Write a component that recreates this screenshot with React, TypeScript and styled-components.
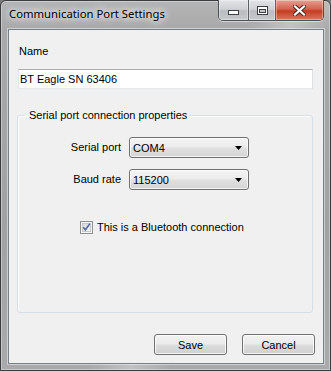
import React from 'react'
import styled, { createGlobalStyle } from 'styled-components'

const GlobalStyle = createGlobalStyle`
  html, body {
    margin: 0;
    padding: 0;
  }
  body {
    width: 331px;
    height: 371px;
    overflow: hidden;
    background: #7a7a7a;
  }
`

const Window = styled.div`
  width: 331px;
  height: 371px;
  box-sizing: border-box;
  display: flex;
  flex-direction: column;
  border: 1px solid #3a3d40;
  border-radius: 6px 6px 0 0;
  box-shadow: inset 0 0 0 1px rgba(255, 255, 255, 0.35);
  background:
    linear-gradient(115deg, rgba(255, 255, 255, 0) 52%, rgba(255, 255, 255, 0.28) 60%, rgba(255, 255, 255, 0) 68%),
    linear-gradient(180deg, #b4b4b4 0%, #a9a9a9 8%, #a2a2a2 60%, #aaaaaa 100%);
  font-family: "Liberation Sans", Arial, sans-serif;
  font-size: 11px;
  color: #000;
`

const TitleBar = styled.div`
  display: flex;
  align-items: flex-start;
  height: 28px;
  flex: 0 0 28px;
  padding-left: 8px;
`

const Title = styled.div`
  font-family: "Noto Sans", "Open Sans", sans-serif;
  font-size: 11.3px;
  line-height: 26px;
  color: #000;
  text-shadow: 0 0 6px #fff, 0 0 10px #fff, 0 0 14px rgba(255, 255, 255, 0.8);
  white-space: nowrap;
`

const CaptionGroup = styled.div`
  display: flex;
  margin: -1px 6px 0 auto;
  height: 20px;
  border: 1px solid #4b5056;
  border-top: none;
  border-radius: 0 0 5px 5px;
  overflow: hidden;
  box-shadow: 0 1px 0 rgba(255, 255, 255, 0.5);
`

const CaptionButton = styled.div<{ $w: number; $close?: boolean }>`
  width: ${p => p.$w}px;
  display: flex;
  align-items: center;
  justify-content: center;
  box-sizing: border-box;
  & + & {
    border-left: 1px solid #5b6066;
  }
  box-shadow: inset 0 0 0 1px rgba(255, 255, 255, 0.35);
  background: ${p =>
    p.$close
      ? 'linear-gradient(180deg, #e7a193 0%, #d2634f 45%, #c43b22 55%, #d9785d 100%)'
      : 'linear-gradient(180deg, #e3e4e6 0%, #cfd1d4 45%, #b9bcc0 55%, #c7c9cc 100%)'};
`

const Client = styled.div`
  flex: 1;
  display: flex;
  flex-direction: column;
  margin: 0 6px 6px 7px;
  padding: 15px 10px 8px 9px;
  border: 1px solid #76808a;
  box-shadow: 0 0 0 1px rgba(255, 255, 255, 0.45);
  background: #f0f0f0;
`

const Label = styled.div`
  line-height: 13px;
  height: 13px;
  padding-left: 1px;
`

const TextBox = styled.input`
  margin-top: 11px;
  height: 20px;
  box-sizing: border-box;
  padding: 0 1px;
  border: 1px solid;
  border-color: #abadb3 #dbdfe6 #e3e9ef #e2e3ea;
  background: #fff;
  font-family: "Liberation Sans", Arial, sans-serif;
  font-size: 11px;
  color: #000;
  outline: none;
`

const GroupBox = styled.fieldset`
  margin: 20px 0 0 -1px;
  padding: 15px 0 0 0;
  height: 204px;
  box-sizing: border-box;
  border: 1px solid #d5dfe5;
  border-radius: 3px;
  box-shadow: inset 1px 1px 0 #fff;
  min-width: 0;
`

const Legend = styled.legend`
  margin-left: 6px;
  padding: 0 2px 0 5px;
  line-height: 13px;
`

const FieldGrid = styled.div`
  display: grid;
  grid-template-columns: 103px 120px;
  column-gap: 8px;
  row-gap: 11px;
  align-items: center;
`

const FieldLabel = styled.div`
  text-align: right;
  line-height: 13px;
`

const Combo = styled.div`
  display: flex;
  align-items: center;
  justify-content: space-between;
  height: 21px;
  box-sizing: border-box;
  padding: 0 6px 0 3px;
  border: 1px solid #707070;
  border-radius: 3px;
  box-shadow: inset 0 0 0 1px rgba(255, 255, 255, 0.7);
  background: linear-gradient(180deg, #f4f4f4 0%, #ececec 48%, #e0e0e0 52%, #d4d4d4 100%);
`

const CheckRow = styled.label`
  display: flex;
  align-items: center;
  gap: 4px;
  margin: 31px 0 0 62px;
  line-height: 13px;
`

const ButtonRow = styled.div`
  display: flex;
  justify-content: flex-end;
  gap: 15px;
  margin: 21px -2px 0 0;
`

const Button = styled.button`
  width: 73px;
  height: 21px;
  padding: 0;
  border: 1px solid #707070;
  border-radius: 3px;
  box-shadow: inset 0 0 0 1px rgba(255, 255, 255, 0.8);
  background: linear-gradient(180deg, #f2f2f2 0%, #ebebeb 48%, #dddddd 52%, #cfcfcf 100%);
  font-family: "Liberation Sans", Arial, sans-serif;
  font-size: 11px;
  color: #000;
`

function Arrow() {
  return (
    <svg width="7" height="4" viewBox="0 0 7 4">
      <path d="M0 0 H7 L3.5 4 Z" fill="#000" />
    </svg>
  )
}

function CheckBox() {
  return (
    <svg width="13" height="13" viewBox="0 0 13 13">
      <defs>
        <linearGradient id="cbg" x1="0" y1="0" x2="1" y2="1">
          <stop offset="0" stopColor="#d6d8db" />
          <stop offset="1" stopColor="#f7f7f7" />
        </linearGradient>
      </defs>
      <rect x="0.5" y="0.5" width="12" height="12" fill="#f4f4f4" stroke="#8f8f8f" />
      <rect x="2.5" y="2.5" width="8" height="8" fill="url(#cbg)" stroke="#c6c8cb" />
      <path d="M3.2 6.3 L5.4 8.8 L9.8 2.8" fill="none" stroke="#5a6fa0" strokeWidth="1.7" />
    </svg>
  )
}

function MinGlyph() {
  return (
    <svg width="11" height="6" viewBox="0 0 11 6" style={{ marginTop: 6 }}>
      <rect x="0.5" y="0.5" width="10" height="4" fill="#fff" stroke="#3c4046" />
    </svg>
  )
}

function MaxGlyph() {
  return (
    <svg width="11" height="9" viewBox="0 0 11 9">
      <rect x="0.5" y="0.5" width="10" height="8" fill="#fff" stroke="#3c4046" />
      <rect x="2.5" y="3.5" width="6" height="3" fill="#c4c7cb" stroke="#3c4046" />
    </svg>
  )
}

function CloseGlyph() {
  return (
    <svg width="13" height="11" viewBox="0 0 13 11">
      <path d="M2 1.5 L11 9.5 M11 1.5 L2 9.5" stroke="#4a2a24" strokeWidth="4.2" strokeLinecap="square" />
      <path d="M2 1.5 L11 9.5 M11 1.5 L2 9.5" stroke="#fff" strokeWidth="2.2" strokeLinecap="square" />
    </svg>
  )
}

export default function App() {
  return (
    <>
      <GlobalStyle />
      <Window>
        <TitleBar>
          <Title>Communication Port Settings</Title>
          <CaptionGroup>
            <CaptionButton $w={29}><MinGlyph /></CaptionButton>
            <CaptionButton $w={27}><MaxGlyph /></CaptionButton>
            <CaptionButton $w={48} $close><CloseGlyph /></CaptionButton>
          </CaptionGroup>
        </TitleBar>
        <Client>
          <Label>Name</Label>
          <TextBox defaultValue="BT Eagle SN 63406" />
          <GroupBox>
            <Legend>Serial port connection properties</Legend>
            <FieldGrid>
              <FieldLabel>Serial port</FieldLabel>
              <Combo>COM4<Arrow /></Combo>
              <FieldLabel>Baud rate</FieldLabel>
              <Combo>115200<Arrow /></Combo>
            </FieldGrid>
            <CheckRow>
              <CheckBox />
              This is a Bluetooth connection
            </CheckRow>
          </GroupBox>
          <ButtonRow>
            <Button>Save</Button>
            <Button>Cancel</Button>
          </ButtonRow>
        </Client>
      </Window>
    </>
  )
}
